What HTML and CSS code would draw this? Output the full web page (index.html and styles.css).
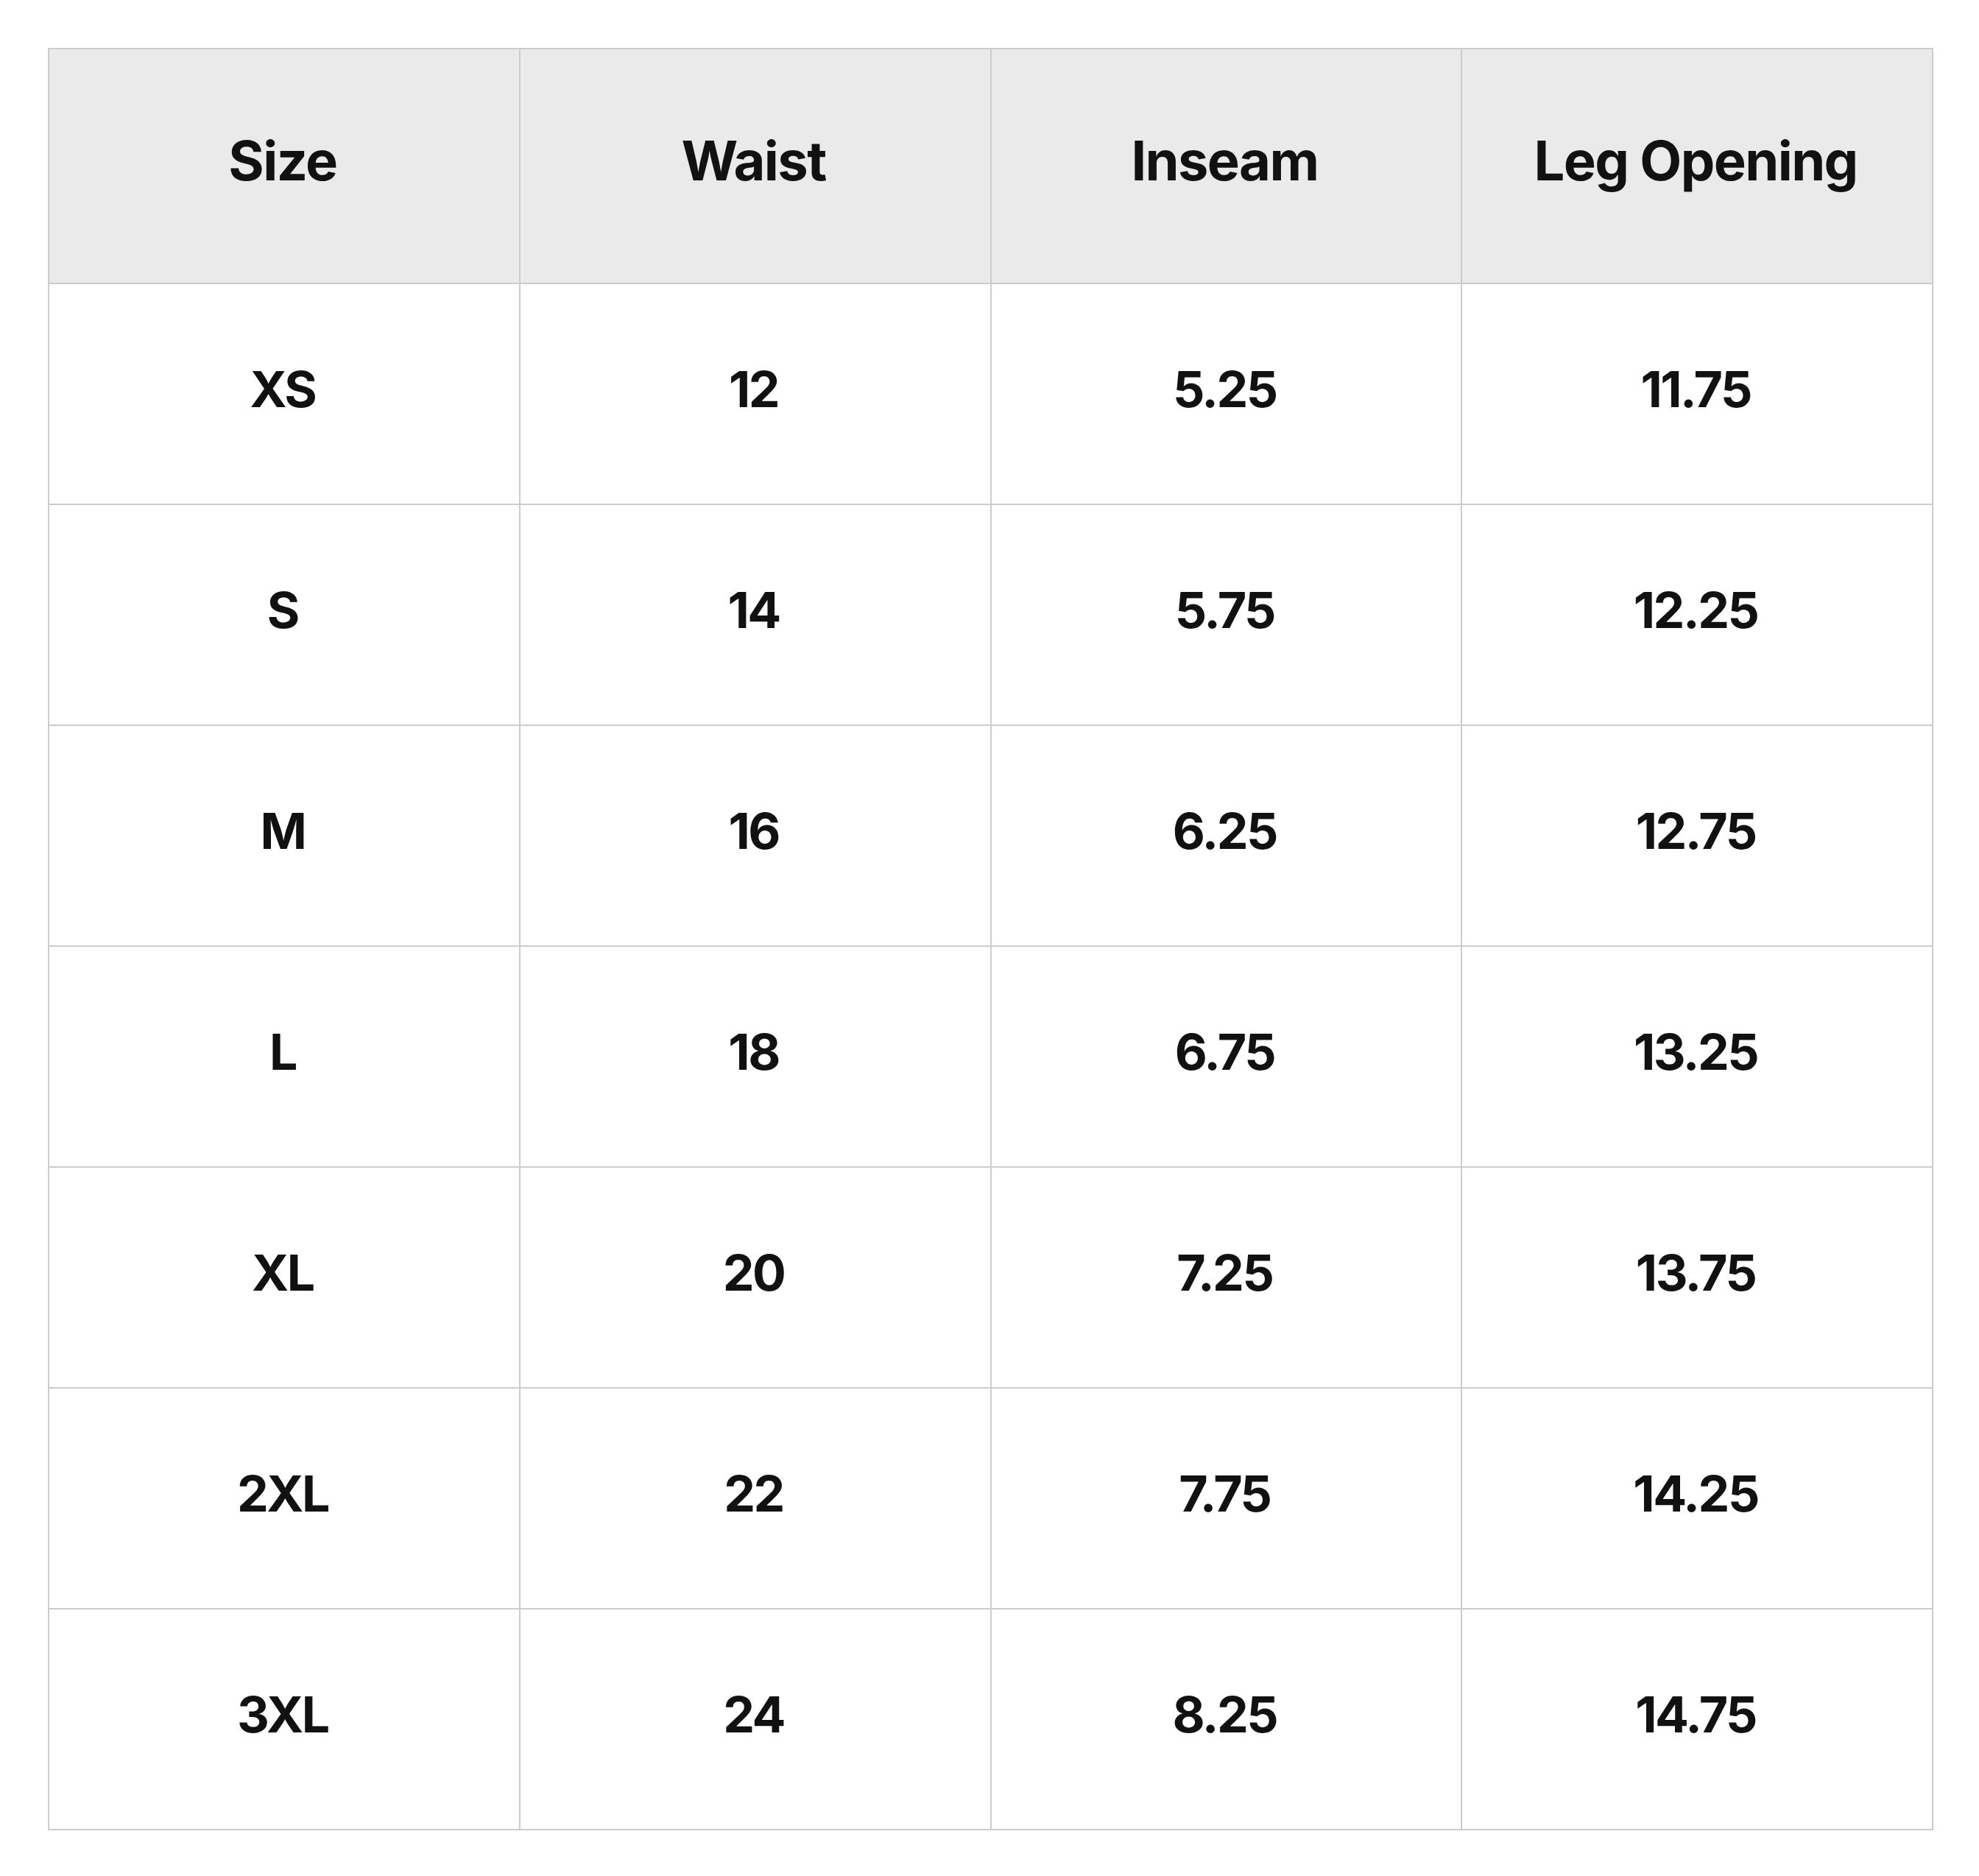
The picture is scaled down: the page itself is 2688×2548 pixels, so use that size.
FILE: index.html
```html
<!DOCTYPE html>
<html lang="en">
<head>
<meta charset="utf-8">
<title>Size Chart</title>
<link rel="stylesheet" href="styles.css">
</head>
<body>
<div class="size-table">
  <div class="cell head">Size</div>
  <div class="cell head">Waist</div>
  <div class="cell head">Inseam</div>
  <div class="cell head">Leg Opening</div>

  <div class="cell">XS</div><div class="cell">12</div><div class="cell">5.25</div><div class="cell">11.75</div>
  <div class="cell">S</div><div class="cell">14</div><div class="cell">5.75</div><div class="cell">12.25</div>
  <div class="cell">M</div><div class="cell">16</div><div class="cell">6.25</div><div class="cell">12.75</div>
  <div class="cell">L</div><div class="cell">18</div><div class="cell">6.75</div><div class="cell">13.25</div>
  <div class="cell">XL</div><div class="cell">20</div><div class="cell">7.25</div><div class="cell">13.75</div>
  <div class="cell">2XL</div><div class="cell">22</div><div class="cell">7.75</div><div class="cell">14.25</div>
  <div class="cell">3XL</div><div class="cell">24</div><div class="cell">8.25</div><div class="cell">14.75</div>
</div>
</body>
</html>
```
FILE: styles.css
```css
html, body {
  margin: 0;
  padding: 0;
  background: #ffffff;
}

body {
  padding: 65px;
  font-family: Inter, "Noto Sans", sans-serif;
  color: #111111;
}

.size-table {
  box-sizing: border-box;
  width: 2561px;
  display: grid;
  grid-template-columns: repeat(4, 1fr);
  grid-template-rows: 319px repeat(7, 300px);
  border-top: 2px solid #cccccc;
  border-left: 2px solid #cccccc;
}

.cell {
  box-sizing: border-box;
  border-right: 2px solid #cccccc;
  border-bottom: 2px solid #cccccc;
  display: flex;
  align-items: center;
  justify-content: center;
  font-size: 68px;
  font-weight: 700;
  letter-spacing: -2.5px;
  padding-bottom: 15px;
  padding-right: 4px;
}

.head {
  background: #eaeaea;
  font-size: 74px;
  letter-spacing: -1.6px;
  padding-bottom: 15px;
}
```
